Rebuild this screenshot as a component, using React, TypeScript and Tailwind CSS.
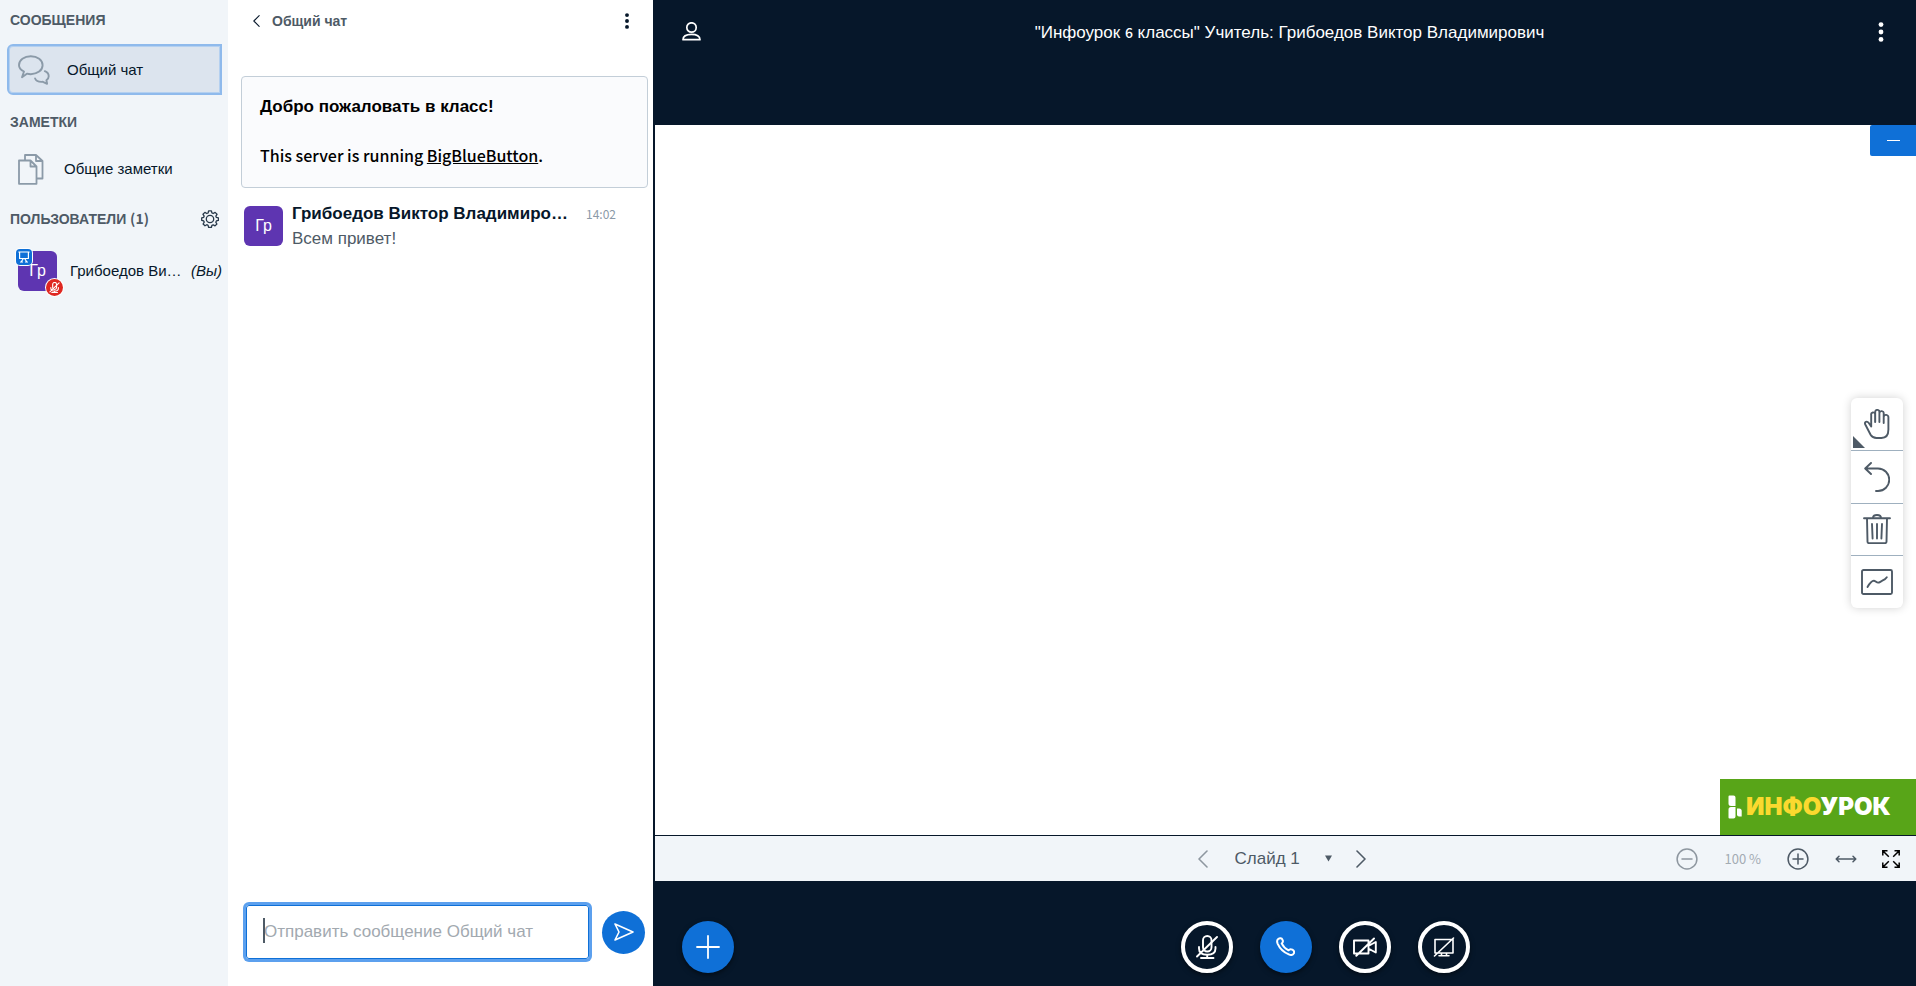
import type { ReactNode } from "react";

const latin = "font-['Noto_Sans_CJK_SC','Noto_Sans',sans-serif]";

type IconProps = { className?: string };

function Svg({
  box,
  width = 1.5,
  className,
  children,
}: IconProps & { box: string; width?: number; children: ReactNode }) {
  return (
    <svg
      viewBox={box}
      className={className}
      fill="none"
      stroke="currentColor"
      strokeWidth={width}
      strokeLinecap="round"
      strokeLinejoin="round"
      aria-hidden="true"
    >
      {children}
    </svg>
  );
}

const ChatIcon = ({ className }: IconProps) => (
  <Svg box="0 0 32 30" width={1.9} className={className}>
    <path d="M6 16.500C2.800 15 1 12.900 1 10.200 1 5.100 6.200 1.200 12.800 1.200S24.600 5.100 24.600 10.200 19.300 19.200 12.800 19.200c-1.400 0-2.700-.2-3.900-.5L4 22.300z" />
    <path d="M26.800 16.200c2.300.9 3.900 2.800 3.900 5 0 1.700-.9 3.100-2.300 4.100l.7 3.500-4.200-2c-3.600.3-6.900-.9-7.800-3.300" />
  </Svg>
);

const NotesIcon = ({ className }: IconProps) => (
  <Svg box="0 0 26 31" width={1.8} className={className}>
    <path d="M1 6.500h11.500l6 6v17.300H1zM12.500 6.500v6h6" />
    <path d="M7 6V1h11l6.500 6v17.500h-5.500M18 1v6h6.500" />
  </Svg>
);

const GearIcon = ({ className }: IconProps) => (
  <Svg box="0 0 18 18" width={1.3} className={className}>
    <path d="M7.600.8h2.800l.5 2.100 1.300.6 1.900-1.100 1.900 1.900L14.900 6.200l.5 1.200 2 .5v2.500l-2 .5-.6 1.300 1.100 1.800-1.900 1.900-1.800-1.100-1.300.5-.5 2.100H7.600l-.5-2.100-1.300-.6-1.800 1.100-1.900-1.800 1.100-1.900-.5-1.200-2-.6V7.900l2-.6.5-1.200L2 4.300l1.900-1.900 1.900 1.100 1.300-.5z" />
    <circle cx="9" cy="9" r="3.700" />
  </Svg>
);

const PresentIcon = ({ className }: IconProps) => (
  <Svg box="0 0 12 12" width={1.200} className={className}>
    <path d="M.8 1h10.400M1.600 1v6.500h8.800V1M5 8 3.500 10.500M7 8l1.500 2.500M2.500 11h2M7.500 11h2" />
  </Svg>
);

const MicOffIcon = ({ className, width = 1.9 }: IconProps & { width?: number }) => (
  <Svg box="0 0 22 24" width={width} className={className}>
    <rect x="7" y="1" width="8.500" height="15.500" rx="4.250" />
    <path d="M3 12v1.500c0 4 3.200 6.200 8.200 6.200s8.300-2.200 8.300-6.200V12M11.200 20v3M5 23h12.500M1 21.500 21 2" />
  </Svg>
);

const UserIcon = ({ className }: IconProps) => (
  <Svg box="0 0 19 19" width={1.700} className={className}>
    <ellipse cx="9.500" cy="5.500" rx="4.700" ry="4.700" />
    <path d="M1 17.700c0-3.600 3-5.400 8.500-5.400s8.500 1.800 8.500 5.400z" />
  </Svg>
);

const DotsIcon = ({ className }: IconProps) => (
  <svg viewBox="0 0 6 20" className={className} fill="currentColor" aria-hidden="true">
    <circle cx="3" cy="2.600" r="2.400" />
    <circle cx="3" cy="10" r="2.400" />
    <circle cx="3" cy="17.400" r="2.400" />
  </svg>
);

const ChevronIcon = ({ className, right = false }: IconProps & { right?: boolean }) => (
  <Svg box="0 0 10 18" width={1.600} className={className}>
    <path d={right ? "M1 1l8 8-8 8" : "M9 1 1 9l8 8"} />
  </Svg>
);

const SendIcon = ({ className }: IconProps) => (
  <Svg box="0 0 20 18" width={1.600} className={className}>
    <path d="M1 1 19 9 1 17l4-8z" />
  </Svg>
);

const HandIcon = ({ className }: IconProps) => (
  <Svg box="0 0 26 30" width={1.900} className={className}>
    <path d="M7.200 17.500V5.800a1.900 1.900 0 0 1 3.900-.8v8M11.200 13V3a1.900 1.900 0 0 1 4.200 0v10M15.400 4a2 2 0 0 1 4.300.6V14M19.700 8a2.200 2.200 0 0 1 4.700.5V20.500c0 5.500-2.500 8.500-7 8.500h-5c-2.800 0-4.500-1.200-5.800-3.300L1.300 15.500c-1.200-2.600 1.700-3.900 3.300-1.700l2.600 3.700" />
  </Svg>
);

const UndoIcon = ({ className }: IconProps) => (
  <Svg box="0 0 26 30" width={1.900} className={className}>
    <path d="M7 1 1.200 6.500 7 12M1.500 6.500H14a11.200 11.200 0 0 1 0 22.500h-2" />
  </Svg>
);

const TrashIcon = ({ className }: IconProps) => (
  <Svg box="0 0 28 30" width={1.900} className={className}>
    <path d="M1 4.200h26M10 4c0-2.500 1.500-3 4-3s4 .5 4 3M4 4.500l.5 23.200c0 .9.500 1.400 1.400 1.400h16.200c.9 0 1.400-.5 1.400-1.400L24 4.500M9 10l.6 14.500M14 10v14.500M19 10l-.6 14.500" />
  </Svg>
);

const WhiteboardIcon = ({ className }: IconProps) => (
  <Svg box="0 0 32 26" width={1.900} className={className}>
    <rect x="1" y="1" width="30" height="24" rx="1.500" />
    <path d="M6.500 18c1.800-3 4.300-6.500 6.500-6.200s2.500 2.500 5 1.700 3-2.200 4.500-2.500 2.800-2 3.300-2.700" />
  </Svg>
);

const PhoneIcon = ({ className }: IconProps) => (
  <Svg box="0 0 20 20" width={2.100} className={className}>
    <path d="M2.300 2.100C4 .9 6 1.200 6.800 2.800c.9 1.700.5 3-.8 4 1.300 2.900 3.900 5.600 7.200 7.200 1-1.300 2.400-1.500 4-.7 1.800 1 2.300 2.500 1.600 3.900-.9 1.800-3 2.100-5.300 1.100C7.900 16 4 12.100 1.800 7.200.9 5 .9 3.200 2.300 2.100z" />
  </Svg>
);

const CameraOffIcon = ({ className }: IconProps) => (
  <Svg box="0 0 24 20" width={1.900} className={className}>
    <path d="M1 3.500h14.500v13H1zM15.500 8.500 18 7.500 22.800 5v10.500L18 13l-2.500-1M3.300 18.800 21 1.500" />
  </Svg>
);

const ScreenOffIcon = ({ className }: IconProps) => (
  <Svg box="0 0 22 20" width={1.600} className={className}>
    <path d="M2 2.500h18v13.500H2zM8.500 16v2.500M13.500 16v2.500M6 18.800h10M1.500 19 20.500 1" />
  </Svg>
);

const ZoomIcon = ({ className, plus = false }: IconProps & { plus?: boolean }) => (
  <Svg box="0 0 22 22" width={1.500} className={className}>
    <circle cx="11" cy="11" r="9.900" />
    <path d={plus ? "M6 11h10M11 6v10" : "M6 11h10"} />
  </Svg>
);

const FitIcon = ({ className }: IconProps) => (
  <Svg box="0 0 22 8" width={1.500} className={className}>
    <path d="M1.500 4h19M4 1.200 1.200 4 4 6.800M18 1.200 20.800 4 18 6.800" />
  </Svg>
);

const FullscreenIcon = ({ className }: IconProps) => (
  <svg viewBox="0 0 18 18" className={className} fill="none" stroke="currentColor" strokeWidth="1.500" aria-hidden="true">
    <path d="M.8 5.500V.8h4.700M12.500.8h4.700v4.700M17.200 12.500v4.700h-4.700M5.500 17.200H.8v-4.700M1 1l5.800 5.800M17 1l-5.800 5.800M17 17l-5.800-5.800M1 17l5.800-5.800" />
  </svg>
);

const LogoMark = ({ className }: IconProps) => (
  <svg viewBox="0 0 14 24" className={className} fill="#fff" aria-hidden="true">
    <path d="M.5 1.500a1 1 0 0 1 1-1H5.500a2 2 0 0 1 2 2V11H3A2.500 2.500 0 0 1 .5 8.500z" />
    <path d="M.5 14.500A2.500 2.500 0 0 1 3 12h4.500v9.500a2 2 0 0 1-2 2h-4a1 1 0 0 1-1-1z" />
    <path d="M9 13.500h2.200a2.500 2.500 0 0 1 2.500 2.500v5.500H11a2 2 0 0 1-2-2z" />
  </svg>
);

function SidebarHeading({ children }: { children: ReactNode }) {
  return <h2 className="text-sm leading-5 font-bold text-[#4e5a66]">{children}</h2>;
}

function Sidebar() {
  return (
    <nav className="flex w-[228px] shrink-0 flex-col bg-[#f1f5f9]">
      <div className="px-[10px] pt-[10px]">
        <SidebarHeading>СООБЩЕНИЯ</SidebarHeading>
      </div>
      <button className="mt-[14px] mr-[6px] ml-[7px] flex h-[51px] items-center gap-[17px] rounded-l-md border-2 border-[#8fbaec] bg-[#dce4ee] pt-px pl-[9px] text-left text-[15px] text-[#06172a] inset-ring inset-ring-[#b4d0f0]">
        <ChatIcon className="h-[30px] w-8 text-[#8b9aa8]" />
        Общий чат
      </button>
      <div className="px-[10px] pt-[17px]">
        <SidebarHeading>ЗАМЕТКИ</SidebarHeading>
      </div>
      <button className="mt-[11px] ml-[7px] flex h-[51px] items-center gap-[20px] pt-px pl-[11px] text-left text-[15px] text-[#06172a]">
        <NotesIcon className="h-[31px] w-[26px] text-[#8b9aa8]" />
        Общие заметки
      </button>
      <div className="flex items-center justify-between pt-[14px] pr-[9px] pl-[10px]">
        <SidebarHeading>
          ПОЛЬЗОВАТЕЛИ <span className={latin}>(1)</span>
        </SidebarHeading>
        <button aria-label="Управление пользователями" className="text-[#27384a]">
          <GearIcon className="size-[18px]" />
        </button>
      </div>
      <button className="mt-[22px] flex h-10 items-center pr-[6px] pl-[18px] text-left text-[15px] text-[#06172a]">
        <span className="relative flex h-10 w-[39px] shrink-0 items-center justify-center rounded-md bg-[#5e35b1] text-base text-white">
          Гр
          <span className="absolute -top-[2px] -left-[2px] flex size-[16px] items-center justify-center rounded-[4px] bg-[#0f70d7] text-white ring-1 ring-white">
            <PresentIcon className="size-3" />
          </span>
          <span className="absolute -right-[6px] -bottom-[5px] flex size-[17px] items-center justify-center rounded-full bg-[#df2721] text-white ring-1 ring-white">
            <MicOffIcon className="size-[11px]" width={2.400} />
          </span>
        </span>
        <span className="ml-[13px] flex-1 whitespace-nowrap">Грибоедов Ви…</span>
        <i>(Вы)</i>
      </button>
    </nav>
  );
}

function Chat() {
  return (
    <section className="flex w-[425px] shrink-0 flex-col bg-white">
      <header className="flex h-[42px] items-center justify-between pr-[22px] pl-[25px]">
        <button className="flex items-center gap-3 text-sm font-bold text-[#4e5a66]">
          <ChevronIcon className="h-3 w-[7px] text-[#06172a]" />
          Общий чат
        </button>
        <button aria-label="Параметры чата" className="text-[#06172a]">
          <DotsIcon className="h-4 w-[8px]" />
        </button>
      </header>
      <div className="flex-1 overflow-hidden pt-[34px] pr-[5px] pl-[13px]">
        <div className="flex h-[112px] flex-col gap-6 rounded border border-[#c3ced8] bg-[#fafbfd] px-[18px] pt-[18px] font-bold text-black">
          <p className="text-[17px] leading-6">Добро пожаловать в класс!</p>
          <p className={`${latin} text-base leading-6 font-medium`}>
            This server is running{" "}
            <a href="https://bigbluebutton.org/" className="underline">
              BigBlueButton
            </a>
            .
          </p>
        </div>
        <article className="mt-[14px] flex pl-[3px]">
          <div className="mt-1 flex h-10 w-[39px] shrink-0 items-center justify-center rounded-md bg-[#5e35b1] text-base text-white">
            Гр
          </div>
          <div className="ml-[9px] min-w-0 flex-1">
            <div className="flex items-center pr-[32px]">
              <span className="whitespace-nowrap text-[17px] leading-6 font-bold text-[#06172a]">
                Грибоедов Виктор Владимиро…
              </span>
              <time className={`${latin} ml-auto text-xs leading-6 text-[#8b9aa8]`}>14:02</time>
            </div>
            <p className="mt-px text-[17px] leading-6 text-[#4e5a66]">Всем привет!</p>
          </div>
        </article>
      </div>
      <form className="flex items-center gap-[13px] pr-2 pb-[27px] pl-[18px]" onSubmit={(e) => e.preventDefault()}>
        <div className="relative min-w-0 flex-1">
          <input
            type="text"
            aria-label="Отправить сообщение Общий чат"
            placeholder="Отправить сообщение Общий чат"
            className="block h-[54px] w-full rounded-[3px] border border-[#0f70d7] px-[17px] text-[17px] ring-3 ring-[#5ca0ee] outline-none placeholder:text-[#a2a9b0]"
          />
          <span className="absolute top-[13px] left-[17px] h-[25px] w-[2px] bg-[#4e5a66]" />
        </div>
        <button aria-label="Отправить" className="flex size-[43px] items-center justify-center rounded-full bg-[#0f70d7] text-white">
          <SendIcon className="h-[18px] w-5" />
        </button>
      </form>
    </section>
  );
}

const tools = [
  { label: "Панорамирование", icon: <HandIcon className="h-[30px] w-[26px]" /> },
  { label: "Отменить", icon: <UndoIcon className="h-[30px] w-[26px]" /> },
  { label: "Очистить", icon: <TrashIcon className="h-[30px] w-7" /> },
  { label: "Многопользовательский режим", icon: <WhiteboardIcon className="h-[26px] w-8" /> },
];

function Whiteboard() {
  return (
    <div className="relative ml-[2px] flex-1 bg-white">
      <button
        aria-label="Свернуть презентацию"
        className="absolute top-0 right-0 flex h-[31px] w-[46px] items-center justify-center rounded-l-[2px] bg-[#0f70d7]"
      >
        <span className="h-px w-[13px] bg-white" />
      </button>
      <div className="absolute top-[273px] right-[13px] flex h-[210px] w-[52px] flex-col divide-y divide-[#9fb0bf] rounded-md bg-white text-[#4e5a66] shadow-[0_0_10px_rgba(0,0,0,0.18)]">
        {tools.map((tool, i) => (
          <button key={tool.label} aria-label={tool.label} className="relative flex flex-1 items-center justify-center">
            {tool.icon}
            {i === 0 && (
              <svg viewBox="0 0 12 12" className="absolute bottom-[2px] left-[2px] size-3" fill="currentColor" aria-hidden="true">
                <path d="M0 0v12h12z" />
              </svg>
            )}
          </button>
        ))}
      </div>
      <div className="absolute right-0 bottom-0 flex h-[56px] w-[196px] items-center bg-[#58a518] pl-2">
        <LogoMark className="h-6 w-[14px]" />
        <span className="ml-[4px] font-['Inter',sans-serif] text-2xl font-black text-white">
          <span className="text-[#fbd92f]">ИНФО</span>УРОК
        </span>
      </div>
    </div>
  );
}

function SlideBar() {
  return (
    <div className="mt-px ml-[2px] flex h-[45px] items-center bg-[#f1f5f9] text-[#4e5a66]">
      <div className="flex-1" />
      <div className="flex items-center pl-2">
        <button aria-label="Предыдущий слайд" className="opacity-60">
          <ChevronIcon className="h-[18px] w-[10px]" />
        </button>
        <div className="relative mr-[18px] ml-[22px]">
          <select
            aria-label="Выбор слайда"
            className="block w-[108px] appearance-none bg-transparent pl-[5px] font-['Liberation_Sans',sans-serif] text-[17px] leading-6"
          >
            <option>Слайд 1</option>
          </select>
          <svg viewBox="0 0 8 7" className="pointer-events-none absolute top-[8px] right-[6px] h-[7px] w-[7px]" fill="currentColor" aria-hidden="true">
            <path d="M0 0h8L4 7z" />
          </svg>
        </div>
        <button aria-label="Следующий слайд">
          <ChevronIcon right className="h-[18px] w-[10px]" />
        </button>
      </div>
      <div className="flex flex-1 items-center justify-end pr-4">
        <button aria-label="Уменьшить" className="opacity-60">
          <ZoomIcon className="size-[22px]" />
        </button>
        <span className={`${latin} mx-[26px] text-[13px] leading-6 text-[#a3abb3]`}>100 %</span>
        <button aria-label="Увеличить">
          <ZoomIcon plus className="size-[22px]" />
        </button>
        <button aria-label="По ширине" className="ml-[26px]">
          <FitIcon className="h-2 w-[22px]" />
        </button>
        <button aria-label="Полный экран" className="ml-[25px] text-black">
          <FullscreenIcon className="size-[18px]" />
        </button>
      </div>
    </div>
  );
}

const controls = [
  { label: "Включить микрофон", icon: <MicOffIcon className="h-6 w-[22px]" />, on: false },
  { label: "Покинуть аудио", icon: <PhoneIcon className="size-[19px]" />, on: true },
  { label: "Включить камеру", icon: <CameraOffIcon className="h-5 w-6" />, on: false },
  { label: "Демонстрация экрана", icon: <ScreenOffIcon className="h-5 w-[22px]" />, on: false },
];

function ActionsBar() {
  return (
    <footer className="flex h-[105px] items-center pt-[26px] pl-[29px] text-white">
      <button
        aria-label="Действия"
        className="flex size-[52px] items-center justify-center rounded-full bg-[#0f70d7] shadow-[0_2px_5px_rgba(0,0,0,0.5)]"
      >
        <Svg box="0 0 24 24" width={1.800} className="size-6">
          <path d="M12 1v22M1 12h22" />
        </Svg>
      </button>
      <div className="flex flex-1 justify-center gap-[27px]">
        {controls.map((c) => (
          <button
            key={c.label}
            aria-label={c.label}
            className={
              c.on
                ? "flex size-[52px] items-center justify-center rounded-full bg-[#0f70d7] shadow-[0_2px_5px_rgba(0,0,0,0.5)]"
                : "flex size-[52px] items-center justify-center rounded-full border-4 border-white shadow-[0_2px_5px_rgba(0,0,0,0.5)]"
            }
          >
            {c.icon}
          </button>
        ))}
      </div>
    </footer>
  );
}

export default function App() {
  return (
    <div className="flex h-screen overflow-hidden bg-[#06172a] font-['Liberation_Sans',Arial,sans-serif]">
      <Sidebar />
      <Chat />
      <main className="flex min-w-0 flex-1 flex-col">
        <header className="flex h-[125px] items-start pt-[22px] pr-8 pl-[29px] text-white">
          <button aria-label="Список пользователей">
            <UserIcon className="size-[19px]" />
          </button>
          <h1 className="flex-1 text-center text-[17px] leading-5 font-medium">
            "Инфоурок <span className={`${latin} text-sm`}>6</span> классы" Учитель: Грибоедов Виктор Владимирович
          </h1>
          <button aria-label="Параметры">
            <DotsIcon className="h-5 w-[6px]" />
          </button>
        </header>
        <Whiteboard />
        <SlideBar />
        <ActionsBar />
      </main>
    </div>
  );
}
